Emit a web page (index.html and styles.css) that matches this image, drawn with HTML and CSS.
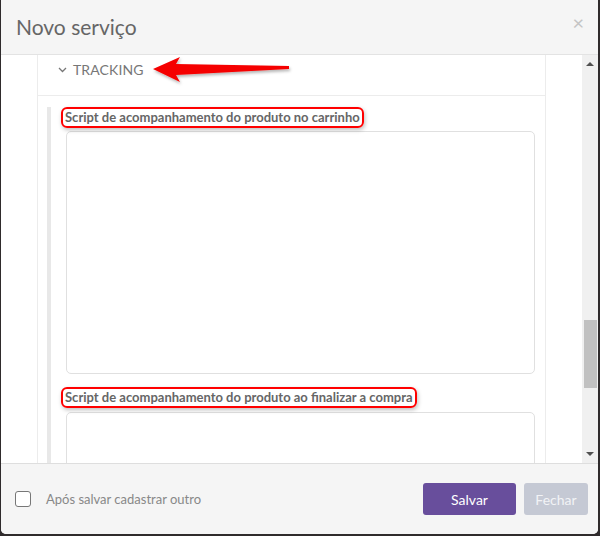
FILE: index.html
```html
<!DOCTYPE html>
<html lang="pt">
<head>
    <meta charset="UTF-8">
    <title>Novo serviço</title>
    <link rel="stylesheet" href="styles.css">
</head>
<body>
    <div class="modal">
        <div class="modal-header">
            <span class="modal-title">Novo serviço</span>
            <span class="modal-close">&times;</span>
        </div>

        <div class="modal-body">
            <div class="scroll-area">
                <div class="panel">
                    <div class="panel-heading">
                        <svg class="chevron" width="9" height="6" viewBox="0 0 9 6">
                            <path d="M1 1 L4.5 4.5 L8 1" fill="none" stroke="#777" stroke-width="1.3"/>
                        </svg>
                        <span>TRACKING</span>
                    </div>
                    <div class="panel-content">
                        <div class="field-group">
                            <label class="field-label"><span class="mark">Script de acompanhamento do produto no carrinho</span></label>
                            <textarea class="field-text tall"></textarea>

                            <label class="field-label second"><span class="mark">Script de acompanhamento do produto ao finalizar a compra</span></label>
                            <textarea class="field-text"></textarea>
                        </div>
                    </div>
                </div>

                <!-- seta vermelha de destaque -->
                <svg class="pointer-arrow" width="150" height="32" viewBox="150 55 150 32">
                    <defs>
                        <filter id="sh" x="-10%" y="-30%" width="120%" height="180%">
                            <feDropShadow dx="1" dy="2" stdDeviation="1.5" flood-color="#000" flood-opacity="0.3"/>
                        </filter>
                    </defs>
                    <polygon points="153,69 180,57 176,64 289,66 289,69 176,75 180,82" fill="#f50000" filter="url(#sh)"/>
                </svg>
            </div>

            <div class="scrollbar">
                <div class="scroll-btn up"></div>
                <div class="scroll-track">
                    <div class="scroll-thumb"></div>
                </div>
                <div class="scroll-btn down"></div>
            </div>
        </div>

        <div class="modal-footer">
            <label class="check">
                <span class="check-box"></span>
                <span>Após salvar cadastrar outro</span>
            </label>
            <div class="buttons">
                <button class="btn btn-save">Salvar</button>
                <button class="btn btn-close">Fechar</button>
            </div>
        </div>
    </div>
</body>
</html>
```

FILE: styles.css
```css
* {
    box-sizing: border-box;
}

body {
    margin: 0;
    padding: 0 2px 0 1px;
    height: 536px;
    background: #2f2b2c;
    font-family: Lato, "Open Sans", sans-serif;
    overflow: hidden;
}

.modal {
    width: 597px;
    height: 534px;
    background: #fff;
    border-radius: 0 0 5px 5px;
    display: flex;
    flex-direction: column;
    overflow: hidden;
}

.modal-header {
    height: 55px;
    flex-shrink: 0;
    background: #f5f5f5;
    border-bottom: 1px solid #e3e3e3;
    display: flex;
    align-items: center;
    justify-content: space-between;
    padding: 0 14px 1px 15px;
}

.modal-title {
    font-size: 21px;
    color: #666;
}

.modal-close {
    font-size: 20px;
    color: #c4c4c4;
    line-height: 1;
    margin-top: -10px;
}

.modal-body {
    flex: 1;
    display: flex;
    min-height: 0;
}

.scroll-area {
    flex: 1;
    overflow: hidden;
    position: relative;
}

.panel {
    margin-left: 36px;
    width: 509px;
    border-left: 1px solid #ececec;
    border-right: 1px solid #ececec;
}

.panel-heading {
    height: 41px;
    border-bottom: 1px solid #ececec;
    display: flex;
    align-items: flex-start;
    padding: 6px 0 0 20px;
    gap: 6px;
    color: #777;
    font-size: 14px;
    letter-spacing: 0.1px;
}

.chevron {
    margin-top: 6px;
}

.panel-content {
    padding: 11px 0 0 9px;
}

.field-group {
    border-left: 4px solid #e8e8e8;
    padding-left: 10px;
    height: 400px;
}

.field-label {
    display: block;
    font-size: 13px;
    font-weight: bold;
    color: #666;
}

.field-label.second {
    margin-top: 13px;
}

.mark {
    display: inline-block;
    border: 2px solid #f00;
    border-radius: 6px;
    padding: 0 2px;
    height: 21px;
    line-height: 17px;
    box-shadow: 1px 2px 4px rgba(0, 0, 0, 0.25);
}

.field-text {
    display: block;
    margin: 3px 0 0 5px;
    width: 469px;
    height: 100px;
    border: 1px solid #e0e0e0;
    border-radius: 5px;
    resize: none;
    background: #fff;
}

.field-label.second + .field-text {
    margin-top: 4px;
}

.field-text.tall {
    height: 243px;
}

.pointer-arrow {
    position: absolute;
    left: 149px;
    top: 0;
}

.scrollbar {
    width: 16px;
    background: #f0f0f0;
    display: flex;
    flex-direction: column;
}

.scroll-btn {
    height: 17px;
    position: relative;
}

.scroll-btn::after {
    content: "";
    position: absolute;
    left: 4px;
    border-left: 4px solid transparent;
    border-right: 4px solid transparent;
}

.scroll-btn.up::after {
    top: 7px;
    border-bottom: 4px solid #505050;
}

.scroll-btn.down::after {
    top: 6px;
    border-top: 4px solid #505050;
}

.scroll-track {
    flex: 1;
    padding-top: 248px;
}

.scroll-thumb {
    margin-left: 2px;
    width: 13px;
    height: 68px;
    background: #c1c1c1;
}

.modal-footer {
    height: 71px;
    flex-shrink: 0;
    background: #f5f5f5;
    border-top: 1px solid #dedede;
    display: flex;
    align-items: center;
    justify-content: space-between;
    padding: 0 10px 0 14px;
}

.check {
    display: flex;
    align-items: center;
    gap: 15px;
    font-size: 13px;
    color: #888;
}

.check-box {
    width: 16px;
    height: 16px;
    border: 1.5px solid #777;
    border-radius: 3px;
    background: #fff;
}

.buttons {
    display: flex;
    gap: 8px;
}

.btn {
    height: 32px;
    border: none;
    border-radius: 3px;
    font-family: Lato, "Open Sans", sans-serif;
    font-size: 14px;
    color: #fff;
}

.btn-save {
    width: 93px;
    background: #684e9c;
}

.btn-close {
    width: 64px;
    background: #c5c9d4;
    color: #f2f3f6;
}
```
